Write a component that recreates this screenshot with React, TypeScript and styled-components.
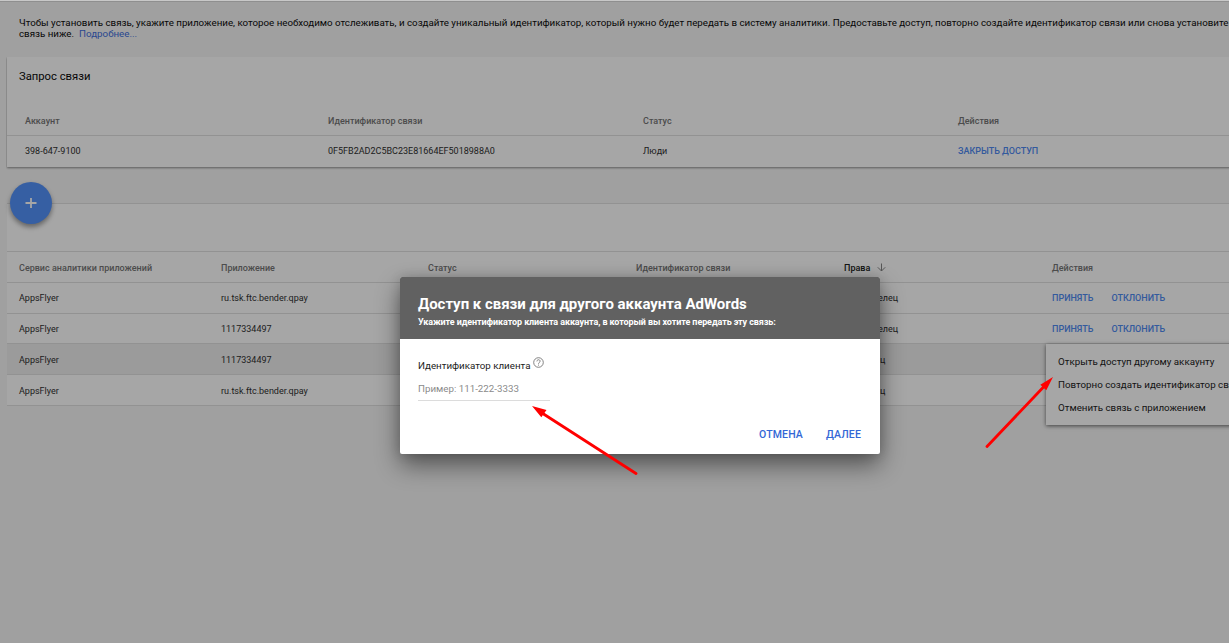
import React from "react";
import styled, { createGlobalStyle } from "styled-components";

const GlobalStyle = createGlobalStyle`
  * { box-sizing: border-box; }
  html, body { margin: 0; height: 100%; overflow: hidden; }
  body { font-family: Roboto, "Liberation Sans", sans-serif; background: #f6f6f6; }
`;

const Page = styled.div`
  position: relative;
  width: 1229px;
  height: 643px;
  overflow: hidden;
  border-top: 1px solid #c8c8c8;
  box-shadow: inset 0 1px 0 #dcdcdc;
  background: #f6f6f6;
  color: #212121;
`;

const Intro = styled.p`
  margin: 0;
  padding: 16px 0 0 19px;
  height: 56px;
  font-size: 9.75px;
  line-height: 11px;
  white-space: nowrap;
  color: #0a0a0a;
`;

const Line = styled.span`
  display: block;
`;

const MoreLink = styled.a`
  margin-left: 5px;
  color: #3f6fdc;
`;

const Card = styled.section`
  width: 1240px;
  height: 110px;
  margin-left: 7px;
  background: #fff;
  box-shadow: 0 1px 2px rgba(0, 0, 0, 0.42);
  clip-path: inset(0 0 -5px -1px);
`;

const CardTitle = styled.h2`
  margin: 0;
  padding: 12px 0 0 12px;
  height: 49px;
  font-size: 11.25px;
  font-weight: 400;
  line-height: 15px;
  color: #0a0a0a;
`;

const Row = styled.div<{ $columns: string; $height: number; $pad: number; $active?: boolean; $last?: boolean; $drop?: number }>`
  display: grid;
  grid-template-columns: ${(p) => p.$columns};
  align-items: center;
  height: ${(p) => p.$height}px;
  padding-top: ${(p) => p.$drop ?? 0}px;
  padding-left: ${(p) => p.$pad}px;
  border-bottom: ${(p) => (p.$last ? "0" : "1px solid #e0e0e0")};
  background: ${(p) => (p.$active ? "#eee" : "#fff")};
`;

const Cell = styled.div`
  display: flex;
  align-items: center;
  font-size: 9px;
  line-height: 12px;
  white-space: nowrap;
  color: #303030;
`;

const HeadCell = styled(Cell)<{ $sorted?: boolean }>`
  font-weight: 500;
  color: ${(p) => (p.$sorted ? "#212121" : "#757575")};
`;

const Action = styled.a`
  margin-right: 18px;
  font-weight: 500;
  color: #4f8af2;
`;

const SortIcon = styled.svg`
  margin: -2px 0 0 7px;
`;

const Services = styled.section`
  width: 1240px;
  margin: 36px 0 0 7px;
  border-top: 1px solid #e0e0e0;
  background: #fff;
`;

const Toolbar = styled.div`
  height: 48px;
  border-bottom: 1px solid #e0e0e0;
`;

const AddButton = styled.button`
  position: absolute;
  left: 10px;
  top: 181px;
  display: flex;
  align-items: center;
  justify-content: center;
  width: 42px;
  height: 42px;
  padding: 0;
  border: 0;
  border-radius: 50%;
  background: #5492fb;
  box-shadow: 0 3px 5px rgba(0, 0, 0, 0.4);
`;

const Menu = styled.ul`
  position: absolute;
  left: 1046px;
  top: 343px;
  width: 210px;
  height: 81px;
  margin: 0;
  padding: 6px 12px;
  list-style: none;
  background: #fff;
  box-shadow: 0 1px 4px rgba(0, 0, 0, 0.6);
`;

const MenuItem = styled.li`
  font-size: 9.75px;
  line-height: 23px;
  white-space: nowrap;
`;

const Scrim = styled.div`
  position: absolute;
  inset: -1px 0 0;
  background: rgba(0, 0, 0, 0.35);
`;

const Dialog = styled.div`
  position: absolute;
  left: 400px;
  top: 276px;
  width: 480px;
  height: 177px;
  border-radius: 2px;
  background: #fff;
  box-shadow: 0 11px 25px rgba(0, 0, 0, 0.48), 0 0 12px rgba(0, 0, 0, 0.14);
`;

const DialogHeader = styled.header`
  height: 62px;
  padding: 17px 18px 0;
  border-radius: 2px 2px 0 0;
  background: #616161;
  color: #fff;
`;

const DialogTitle = styled.h3`
  margin: 0;
  font-size: 15px;
  font-weight: 700;
  line-height: 20px;
  letter-spacing: -0.02px;
  white-space: nowrap;
`;

const DialogSubtitle = styled.p`
  margin: 1px 0 0;
  font-size: 9px;
  font-weight: 700;
  line-height: 14px;
  letter-spacing: -0.09px;
  white-space: nowrap;
`;

const DialogBody = styled.div`
  padding: 17px 18px 0;
`;

const FieldLabel = styled.label`
  display: flex;
  height: 22px;
  font-size: 9.75px;
  line-height: 20px;
  color: #212121;
`;

const HelpIcon = styled.svg`
  margin: 1px 0 0 3px;
`;

const Field = styled.input`
  display: block;
  width: 132px;
  height: 23px;
  padding: 0 0 2px;
  border: 0;
  border-bottom: 1px solid #dcdcdc;
  outline: 0;
  background: none;
  font: 9.75px Roboto, "Liberation Sans", sans-serif;
  &::placeholder { color: #8a8a8a; opacity: 1; }
`;

const DialogActions = styled.footer`
  display: flex;
  justify-content: flex-end;
  gap: 23px;
  margin: 26px 1px 0 0;
`;

const DialogButton = styled.button`
  padding: 0;
  border: 0;
  background: none;
  font: 500 10.5px/16px Roboto, "Liberation Sans", sans-serif;
  letter-spacing: 0.15px;
  color: #3367d6;
`;

const Annotations = styled.svg`
  position: absolute;
  left: 0;
  top: -1px;
`;

const requestColumns = "303px 315px 315px 1fr";
const serviceColumns = "202px 207px 208px 208px 208px 1fr";

const services = [
  { app: "ru.tsk.ftc.bender.qpay", pending: true, rights: "Не владелец", height: 31 },
  { app: "1117334497", pending: true, rights: "Не владелец", height: 30, drop: 1 },
  { app: "1117334497", active: true, rights: "Владелец", height: 31, drop: 2 },
  { app: "ru.tsk.ftc.bender.qpay", rights: "Владелец", height: 31, drop: 2 },
];

export default function App() {
  return (
    <>
      <GlobalStyle />
      <Page>
        <Intro>
          <Line>
            Чтобы установить связь, укажите приложение, которое необходимо отслеживать, и создайте уникальный
            идентификатор, который нужно будет передать в систему аналитики. Предоставьте доступ, повторно создайте
            идентификатор связи или снова установите
          </Line>
          <Line>
            связь ниже.<MoreLink>Подробнее...</MoreLink>
          </Line>
        </Intro>

        <Card>
          <CardTitle>Запрос связи</CardTitle>
          <Row $columns={requestColumns} $height={30} $pad={18}>
            <HeadCell>Аккаунт</HeadCell>
            <HeadCell>Идентификатор связи</HeadCell>
            <HeadCell>Статус</HeadCell>
            <HeadCell>Действия</HeadCell>
          </Row>
          <Row $columns={requestColumns} $height={30} $pad={18} $last>
            <Cell>398-647-9100</Cell>
            <Cell>0F5FB2AD2C5BC23E81664EF5018988A0</Cell>
            <Cell>Люди</Cell>
            <Cell><Action>ЗАКРЫТЬ ДОСТУП</Action></Cell>
          </Row>
        </Card>

        <Services>
          <Toolbar />
          <Row $columns={serviceColumns} $height={31} $pad={12} $drop={2}>
            <HeadCell>Сервис аналитики приложений</HeadCell>
            <HeadCell>Приложение</HeadCell>
            <HeadCell>Статус</HeadCell>
            <HeadCell>Идентификатор связи</HeadCell>
            <HeadCell $sorted>
              Права
              <SortIcon width="9" height="9" viewBox="0 0 9 9" fill="none" stroke="#858585">
                <path d="M4.5 0.5V8M0.8 4.3L4.5 8L8.2 4.3" />
              </SortIcon>
            </HeadCell>
            <HeadCell>Действия</HeadCell>
          </Row>
          {services.map((s, i) => (
            <Row key={i} $columns={serviceColumns} $height={s.height} $pad={12} $active={s.active} $drop={s.drop}>
              <Cell>AppsFlyer</Cell>
              <Cell>{s.app}</Cell>
              <Cell />
              <Cell />
              <Cell>{s.rights}</Cell>
              <Cell>
                {s.pending && (
                  <>
                    <Action>ПРИНЯТЬ</Action>
                    <Action>ОТКЛОНИТЬ</Action>
                  </>
                )}
              </Cell>
            </Row>
          ))}
        </Services>

        <AddButton aria-label="+">
          <svg width="12" height="12" viewBox="0 0 12 12" stroke="#fff" strokeWidth="1.8">
            <path d="M6 1V11M0.5 6H11.5" />
          </svg>
        </AddButton>

        <Menu>
          <MenuItem>Открыть доступ другому аккаунту</MenuItem>
          <MenuItem>Повторно создать идентификатор связи</MenuItem>
          <MenuItem>Отменить связь с приложением</MenuItem>
        </Menu>

        <Scrim />
        <Dialog role="dialog">
          <DialogHeader>
            <DialogTitle>Доступ к связи для другого аккаунта AdWords</DialogTitle>
            <DialogSubtitle>Укажите идентификатор клиента аккаунта, в который вы хотите передать эту связь:</DialogSubtitle>
          </DialogHeader>
          <DialogBody>
            <FieldLabel>
              Идентификатор клиента
              <HelpIcon width="11" height="11" viewBox="0 0 11 11" fill="none" stroke="#757575">
                <circle cx="5.5" cy="5.5" r="4.8" strokeWidth="0.9" />
                <path d="M3.9 4.4C3.9 2.2 7.1 2.2 7.1 4.2C7.1 5.4 5.5 5.5 5.5 6.8M5.5 7.6V8.6" strokeWidth="0.9" />
              </HelpIcon>
            </FieldLabel>
            <Field placeholder="Пример: 111-222-3333" />
            <DialogActions>
              <DialogButton>ОТМЕНА</DialogButton>
              <DialogButton>ДАЛЕЕ</DialogButton>
            </DialogActions>
          </DialogBody>
        </Dialog>

        <Annotations width="1229" height="643" viewBox="0 0 1229 643" stroke="#f00" fill="#f00">
          <path d="M542 413L636 473.5M1044 386.5L987 446.5" strokeWidth="2.8" strokeLinecap="round" />
          <path d="M532 406L546.5 410L541.3 417.3ZM1053 377L1040.3 384.7L1046.3 390.3Z" stroke="none" />
        </Annotations>
      </Page>
    </>
  );
}
